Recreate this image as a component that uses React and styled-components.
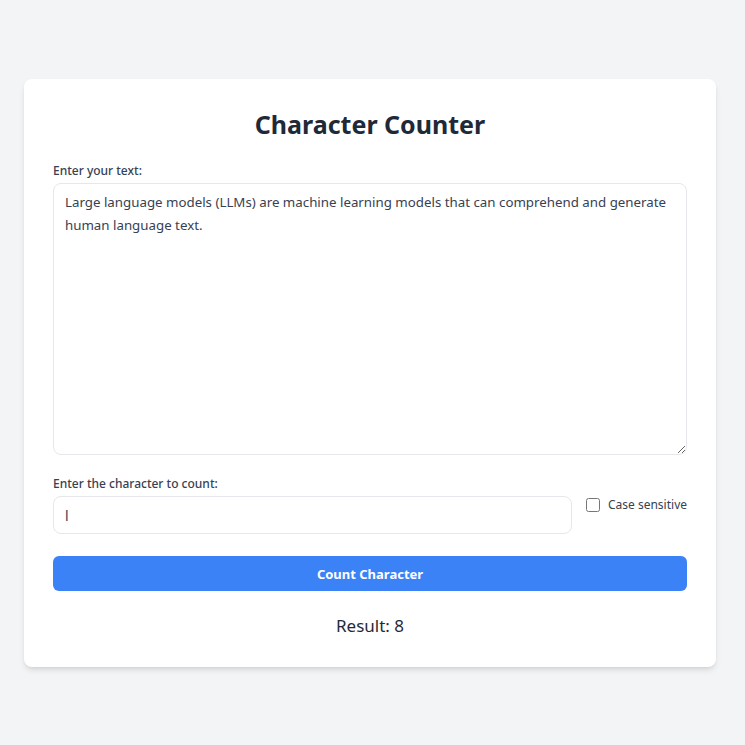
import React, { useState } from "react";
import styled, { createGlobalStyle } from "styled-components";

const Global = createGlobalStyle`
    * { box-sizing: border-box; }
    body {
        margin: 0;
        background: #f3f4f6;
        font-family: "Noto Sans", "Open Sans", sans-serif;
        color: #1f2937;
    }
`

const Page = styled.div`
    display: flex;
    padding: 79px 24px;
    min-height: 745px;
`
const Card = styled.div`
    width: 692px;
    background: #ffffff;
    border-radius: 8px;
    box-shadow: 0 4px 6px -1px rgba(0,0,0,0.1), 0 2px 4px -2px rgba(0,0,0,0.1);
    padding: 27px 29px 26px;
    display: flex;
    flex-direction: column;
    height: 588px;
`
const Title = styled.h1`
    margin: 0 0 21px;
    text-align: center;
    font-size: 25px;
    font-weight: 700;
    color: #1f2937;
    line-height: 36px;
`
const Label = styled.label`
    display: block;
    font-size: 12px;
    font-weight: 500;
    color: #374151;
    line-height: 16px;
    margin-bottom: 4px;
`
const TextArea = styled.textarea`
    display: block;
    width: 100%;
    height: 272px;
    padding: 7px 11px;
    border: 1px solid #e5e7eb;
    border-radius: 8px;
    font-family: inherit;
    font-size: 13.3px;
    line-height: 23px;
    color: #374151;
    resize: vertical;
    outline: none;
    margin: 0 0 21px;
`
const Row = styled.div`
    display: flex;
    align-items: flex-start;
    gap: 14px;
    margin-bottom: 22px;
`
const Field = styled.div`
    flex: 1;
`
const Input = styled.input`
    display: block;
    width: 100%;
    height: 38px;
    padding: 0 11px;
    border: 1px solid #e5e7eb;
    border-radius: 8px;
    font-family: inherit;
    font-size: 14px;
    color: #374151;
    outline: none;
`
const Check = styled.label`
    display: flex;
    align-items: center;
    gap: 8px;
    margin-top: 20px;
    font-size: 12px;
    color: #374151;
    white-space: nowrap;
    input {
        margin: 0;
        width: 14px;
        height: 14px;
    }
`
const Button = styled.button`
    width: 100%;
    height: 35px;
    border: none;
    border-radius: 6px;
    background: #3b82f6;
    color: #ffffff;
    font-family: inherit;
    font-size: 13px;
    font-weight: 700;
    cursor: pointer;
`
const Result = styled.div`
    margin-top: 23px;
    text-align: center;
    font-size: 17px;
    color: #1f2937;
`

export default function App() {
    const [text, setText] = useState("Large language models (LLMs) are machine learning models that can comprehend and generate human language text.")
    const [char, setChar] = useState("l")
    const [caseSensitive, setCaseSensitive] = useState(false)
    const [result, setResult] = useState(8)

    const count = () => {
        if (!char) return setResult(0)
        const t = caseSensitive ? text : text.toLowerCase()
        const c = caseSensitive ? char : char.toLowerCase()
        setResult(t.split(c).length - 1)
    }

    return <>
        <Global />
        <Page>
            <Card>
                <Title>Character Counter</Title>
                <Label>Enter your text:</Label>
                <TextArea value={text} onChange={e => setText(e.target.value)} />
                <Row>
                    <Field>
                        <Label>Enter the character to count:</Label>
                        <Input value={char} maxLength={1} onChange={e => setChar(e.target.value)} />
                    </Field>
                    <Check>
                        <input type="checkbox" checked={caseSensitive} onChange={e => setCaseSensitive(e.target.checked)} />
                        Case sensitive
                    </Check>
                </Row>
                <Button onClick={count}>Count Character</Button>
                <Result>Result: {result}</Result>
            </Card>
        </Page>
    </>
}
